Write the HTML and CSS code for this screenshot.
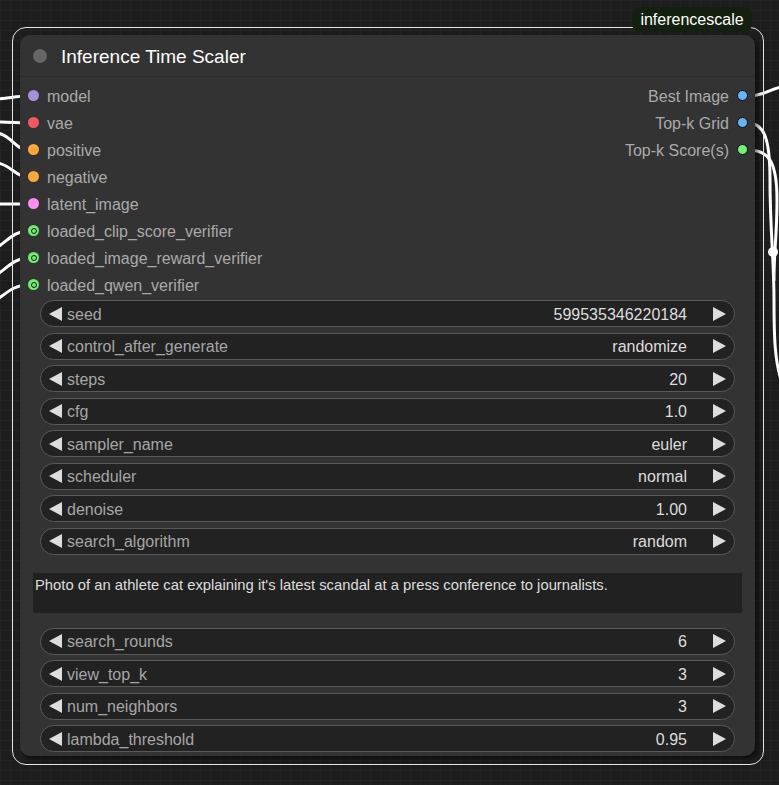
FILE: index.html
```html
<!DOCTYPE html>
<html>
<head>
<meta charset="utf-8">
<link rel="stylesheet" href="styles.css">
</head>
<body>
<div class="canvas">
  <svg class="wires" width="779" height="785" viewBox="0 0 779 785">
    <g fill="none" stroke="#ffffff" stroke-width="3" stroke-linecap="round">
      <path d="M-2,99 C10,98 18,96 28,96"/>
      <path d="M-2,122 L28,123"/>
      <path d="M-2,133 C12,136 16,150 28,150"/>
      <path d="M-2,163 C12,166 16,177 28,177"/>
      <path d="M-2,204 L28,204"/>
      <path d="M-2,247 C10,238 16,231 28,231"/>
      <path d="M-2,274 C10,265 16,258 28,258"/>
      <path d="M-2,299 C10,290 16,285 28,285"/>
      <path d="M748,96 C764,96 768,90 781,87"/>
      <path d="M748,123 C764,123 770,138 770,180 C770,230 774,260 774,300 C774,340 775,360 781,380"/>
      <path d="M748,150 C768,150 777,160 777,200 C777,235 774,250 774,280"/>
    </g>
    <circle cx="773" cy="252" r="5" fill="#ffffff"/>
  </svg>
  <div class="selection"></div>
  <div class="badge">inferencescale</div>
  <div class="node">
    <div class="title"><span class="title-dot"></span><span class="title-text">Inference Time Scaler</span></div>
    <div class="slots">
      <div class="inputs">
        <div class="slot"><span class="dot c-model"></span><span class="txt">model</span></div>
        <div class="slot"><span class="dot c-vae"></span><span class="txt">vae</span></div>
        <div class="slot"><span class="dot c-cond"></span><span class="txt">positive</span></div>
        <div class="slot"><span class="dot c-cond"></span><span class="txt">negative</span></div>
        <div class="slot"><span class="dot c-latent"></span><span class="txt">latent_image</span></div>
        <div class="slot"><span class="dot c-ver"><span class="ring"></span></span><span class="txt">loaded_clip_score_verifier</span></div>
        <div class="slot"><span class="dot c-ver"><span class="ring"></span></span><span class="txt">loaded_image_reward_verifier</span></div>
        <div class="slot"><span class="dot c-ver"><span class="ring"></span></span><span class="txt">loaded_qwen_verifier</span></div>
      </div>
      <div class="outputs">
        <div class="slot out"><span class="txt">Best Image</span><span class="dot c-image"></span></div>
        <div class="slot out"><span class="txt">Top-k Grid</span><span class="dot c-image"></span></div>
        <div class="slot out"><span class="txt">Top-k Score(s)</span><span class="dot c-score"></span></div>
      </div>
    </div>
    <div class="widgets first">
      <div class="widget"><span class="arrow left"></span><span class="label">seed</span><span class="value">599535346220184</span><span class="arrow right"></span></div>
      <div class="widget"><span class="arrow left"></span><span class="label">control_after_generate</span><span class="value">randomize</span><span class="arrow right"></span></div>
      <div class="widget"><span class="arrow left"></span><span class="label">steps</span><span class="value">20</span><span class="arrow right"></span></div>
      <div class="widget"><span class="arrow left"></span><span class="label">cfg</span><span class="value">1.0</span><span class="arrow right"></span></div>
      <div class="widget"><span class="arrow left"></span><span class="label">sampler_name</span><span class="value">euler</span><span class="arrow right"></span></div>
      <div class="widget"><span class="arrow left"></span><span class="label">scheduler</span><span class="value">normal</span><span class="arrow right"></span></div>
      <div class="widget"><span class="arrow left"></span><span class="label">denoise</span><span class="value">1.00</span><span class="arrow right"></span></div>
      <div class="widget"><span class="arrow left"></span><span class="label">search_algorithm</span><span class="value">random</span><span class="arrow right"></span></div>
    </div>
    <div class="prompt">Photo of an athlete cat explaining it's latest scandal at a press conference to journalists.</div>
    <div class="widgets second">
      <div class="widget"><span class="arrow left"></span><span class="label">search_rounds</span><span class="value">6</span><span class="arrow right"></span></div>
      <div class="widget"><span class="arrow left"></span><span class="label">view_top_k</span><span class="value">3</span><span class="arrow right"></span></div>
      <div class="widget"><span class="arrow left"></span><span class="label">num_neighbors</span><span class="value">3</span><span class="arrow right"></span></div>
      <div class="widget"><span class="arrow left"></span><span class="label">lambda_threshold</span><span class="value">0.95</span><span class="arrow right"></span></div>
    </div>
  </div>
</div>
</body>
</html>
```

FILE: styles.css
```css
* { box-sizing: border-box; }
html, body { margin: 0; padding: 0; }
body {
  width: 779px;
  height: 785px;
  overflow: hidden;
  font-family: "Liberation Sans", Arial, sans-serif;
  background-color: #1d1d1d;
  background-image:
    linear-gradient(to right, #232323 1px, transparent 1px),
    linear-gradient(to bottom, #232323 1px, transparent 1px);
  background-size: 10px 10px;
}
.canvas {
  position: relative;
  width: 779px;
  height: 785px;
}
.wires {
  position: absolute;
  left: 0;
  top: 0;
}
.selection {
  position: absolute;
  left: 12px;
  top: 27px;
  width: 752px;
  height: 738px;
  border: 1.5px solid #e6e6e6;
  border-radius: 14px;
}
.badge {
  position: absolute;
  left: 632px;
  top: 7px;
  width: 120px;
  height: 25px;
  background: #14200f;
  color: #ffffff;
  font-size: 16px;
  line-height: 25px;
  text-align: center;
  border-radius: 8px;
}
.node {
  position: absolute;
  left: 20px;
  top: 35px;
  width: 735px;
  height: 721px;
  background: #333333;
  border-radius: 10px;
  box-shadow: 3px 3px 5px rgba(0, 0, 0, 0.55);
  display: flex;
  flex-direction: column;
}
.title {
  height: 42px;
  display: flex;
  align-items: center;
  padding-left: 13px;
  gap: 14px;
  border-bottom: 1px solid #2a2a2a;
  flex-shrink: 0;
}
.title-dot {
  width: 14px;
  height: 14px;
  border-radius: 50%;
  background: #666666;
}
.title-text {
  color: #ffffff;
  font-size: 19px;
  padding-top: 2px;
}
.slots {
  display: flex;
  justify-content: space-between;
  padding-top: 5px;
}
.inputs, .outputs {
  display: flex;
  flex-direction: column;
}
.slot {
  height: 27px;
  display: flex;
  align-items: center;
  color: #aaaaaa;
  font-size: 16px;
  padding-left: 8px;
  gap: 8px;
}
.slot .txt { padding-top: 2px; }
.slot.out {
  justify-content: flex-end;
  padding-left: 0;
  padding-right: 7px;
  gap: 8px;
}
.dot {
  width: 11px;
  height: 11px;
  border-radius: 50%;
  flex-shrink: 0;
  position: relative;
}
.c-model { background: #a98fd9; }
.c-vae { background: #f4595f; }
.c-cond { background: #ffa73a; }
.c-latent { background: #ff8ef3; }
.c-ver { background: #6cf06e; }
.c-ver .ring {
  position: absolute;
  left: 2.5px;
  top: 2.5px;
  width: 6px;
  height: 6px;
  border-radius: 50%;
  border: 1.3px solid #1a1a1a;
}
.c-image { background: #64b5f6; border: 1px solid #111111; }
.c-score { background: #70f274; border: 1px solid #111111; }
.widgets {
  display: flex;
  flex-direction: column;
  gap: 5.5px;
  padding: 0 20px;
}
.widgets.first { margin-top: 2px; }
.widgets.second { margin-top: 14.5px; }
.widget {
  height: 27px;
  background: #222222;
  border: 1px solid #595959;
  border-radius: 14px;
  display: flex;
  align-items: center;
  padding-left: 8px;
  padding-right: 8px;
  font-size: 16px;
}
.label {
  color: #a6a6a6;
  margin-left: 5px;
  flex: 1;
  padding-top: 2px;
}
.value {
  color: #dddddd;
  margin-right: 26px;
  padding-top: 2px;
}
.arrow {
  width: 0;
  height: 0;
  border-top: 7px solid transparent;
  border-bottom: 7px solid transparent;
}
.arrow.left { border-right: 13px solid #dddddd; }
.arrow.right { border-left: 13px solid #dddddd; }
.prompt {
  margin: 18.5px 13px 0 13px;
  height: 40px;
  background: #212121;
  color: #dedede;
  font-size: 14.8px;
  line-height: 16px;
  padding: 4px 2px;
  font-family: "Liberation Sans", Arial, sans-serif;
}
```
